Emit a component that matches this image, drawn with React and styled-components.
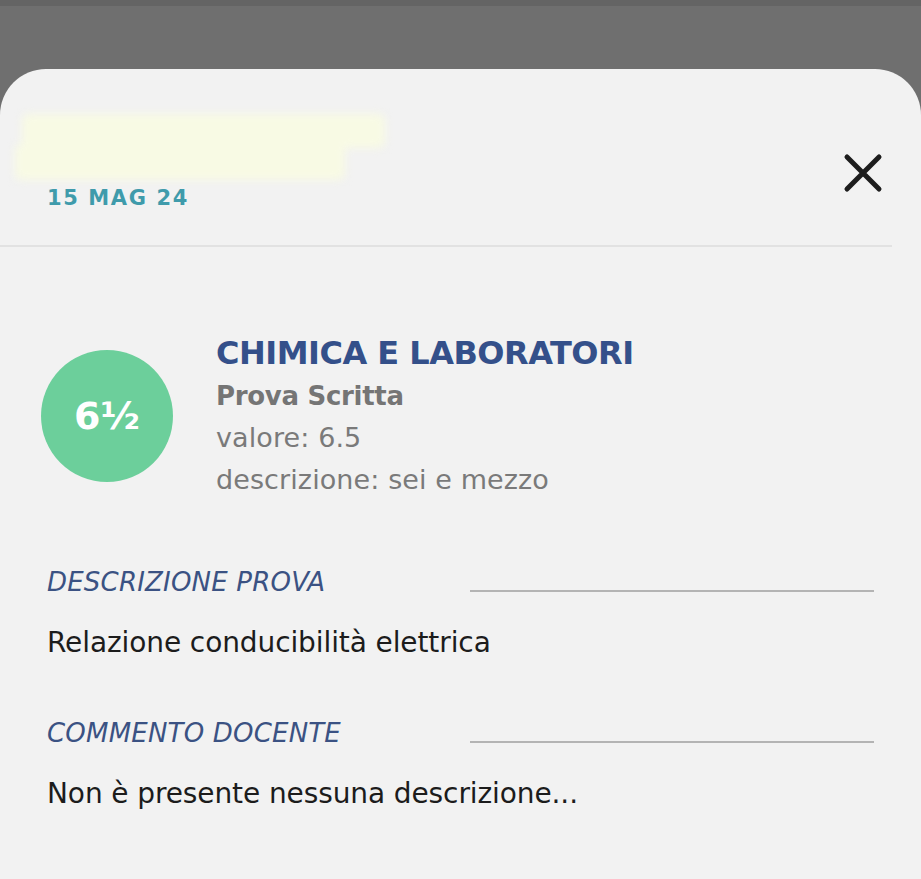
import React from 'react';
import styled, { createGlobalStyle } from 'styled-components';

const Global = createGlobalStyle`
  html, body { margin: 0; padding: 0; }
  body { background: #6f6f6f; font-family: "DejaVu Sans", "Noto Sans", sans-serif; }
`;

const Backdrop = styled.div`
  min-height: 879px;
  background: #6f6f6f;
  border-top: 6px solid #646464;
  box-sizing: border-box;
  padding-top: 63px;
  display: flex;
  flex-direction: column;
`;

const Sheet = styled.div`
  flex: 1;
  background: #f2f2f2;
  border-radius: 46px 46px 0 0;
  min-height: 810px;
`;

const Header = styled.div`
  display: flex;
  justify-content: space-between;
  align-items: flex-end;
  padding: 45px 8px 0 0;
  height: 178px;
  box-sizing: border-box;
  border-bottom: 2px solid #e2e2e2;
  margin-right: 29px;
`;

const Who = styled.div`
  display: flex;
  flex-direction: column;
  padding-bottom: 33px;
`;

const Smudges = styled.div`
  display: flex;
  flex-direction: column;
  filter: blur(4px);
  margin-bottom: 4px;
`;

const Smudge = styled.div`
  height: ${p => p.h}px;
  width: ${p => p.w}px;
  margin-left: ${p => p.x}px;
  margin-top: ${p => p.y || 0}px;
  background: #f8fae4;
  border-radius: 6px;
`;

const DateText = styled.div`
  margin-left: 47px;
  font-size: 21px;
  font-weight: 700;
  line-height: 28px;
  color: #3f9bab;
  letter-spacing: 1.6px;
`;

const Close = styled.button`
  border: 0;
  background: none;
  padding: 0;
  width: 42px;
  height: 42px;
  margin-bottom: 51px;
  cursor: pointer;
`;

const Body = styled.div`
  padding: 0 47px 0 41px;
`;

const GradeRow = styled.div`
  display: flex;
  align-items: center;
  gap: 43px;
  margin-top: 84px;
`;

const Badge = styled.div`
  width: 132px;
  height: 132px;
  border-radius: 50%;
  background: #6ccf9b;
  color: #fff;
  font-weight: 700;
  font-size: 38px;
  display: flex;
  align-items: center;
  justify-content: center;
  flex-shrink: 0;
`;

const Info = styled.div`
  display: flex;
  flex-direction: column;
`;

const Subject = styled.div`
  font-size: 32px;
  font-weight: 700;
  color: #34508a;
  line-height: 44px;
  letter-spacing: -0.5px;
`;

const Kind = styled.div`
  font-size: 26px;
  font-weight: 700;
  color: #757575;
  line-height: 42px;
  letter-spacing: -0.3px;
`;

const Meta = styled.div`
  font-size: 27px;
  color: #7a7a7a;
  line-height: 42px;
  letter-spacing: 0.1px;
`;

const Section = styled.div`
  padding-left: 6px;
  margin-top: ${p => p.top}px;
`;

const SectionHead = styled.div`
  display: grid;
  grid-template-columns: 423px 1fr;
  align-items: end;
`;

const Label = styled.div`
  font-style: italic;
  font-size: 26px;
  color: #3b5283;
  line-height: 32px;
  letter-spacing: 0.2px;
`;

const Rule = styled.div`
  height: 2px;
  background: #b4b4b4;
  margin-bottom: 6px;
`;

const Text = styled.div`
  margin-top: 28px;
  font-size: 28px;
  color: #1c1c1c;
  line-height: 34px;
  letter-spacing: -0.1px;
`;

export default function App() {
  return (
    <>
      <Global />
      <Backdrop>
        <Sheet>
          <Header>
            <Who>
              <Smudges>
                <Smudge w={363} h={34} x={22} />
                <Smudge w={330} h={36} x={15} y={-4} />
              </Smudges>
              <DateText>15 MAG 24</DateText>
            </Who>
            <Close aria-label="chiudi">
              <svg width="42" height="42" viewBox="0 0 42 42">
                <path d="M5 5 L37 37 M37 5 L5 37" stroke="#1d1d1d" strokeWidth="5" strokeLinecap="round" />
              </svg>
            </Close>
          </Header>
          <Body>
            <GradeRow>
              <Badge>6½</Badge>
              <Info>
                <Subject>CHIMICA E LABORATORI</Subject>
                <Kind>Prova Scritta</Kind>
                <Meta>valore: 6.5</Meta>
                <Meta>descrizione: sei e mezzo</Meta>
              </Info>
            </GradeRow>
            <Section top={65}>
              <SectionHead>
                <Label>DESCRIZIONE PROVA</Label>
                <Rule />
              </SectionHead>
              <Text>Relazione conducibilità elettrica</Text>
            </Section>
            <Section top={57}>
              <SectionHead>
                <Label>COMMENTO DOCENTE</Label>
                <Rule />
              </SectionHead>
              <Text>Non è presente nessuna descrizione...</Text>
            </Section>
          </Body>
        </Sheet>
      </Backdrop>
    </>
  );
}
